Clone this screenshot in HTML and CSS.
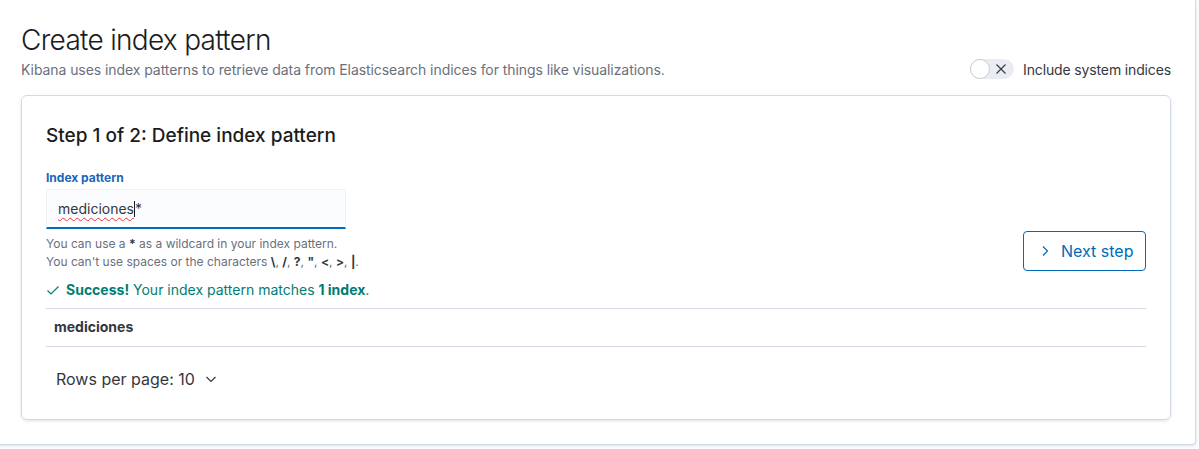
FILE: index.html
```html
<!DOCTYPE html>
<html>
<head>
<meta charset="utf-8">
<link rel="stylesheet" href="styles.css">
</head>
<body>
<div class="page">
  <div class="panel">
    <div class="header">
      <div class="header-text">
        <h1 class="title">Create index pattern</h1>
        <p class="subtitle">Kibana uses index patterns to retrieve data from Elasticsearch indices for things like visualizations.</p>
      </div>
      <div class="switch-wrap">
        <span class="switch">
          <span class="knob"></span>
          <svg class="switch-x" width="12" height="12" viewBox="0 0 12 12"><path d="M1.5 1.5 L10.5 10.5 M10.5 1.5 L1.5 10.5" stroke="#343741" stroke-width="1.1" fill="none"/></svg>
        </span>
        <span class="switch-label">Include system indices</span>
      </div>
    </div>

    <div class="card">
      <h2 class="step-title">Step 1 of 2: Define index pattern</h2>
      <div class="form-row">
        <div class="form-left">
          <label class="field-label">Index pattern</label>
          <div class="input"><span class="typed">mediciones</span><span class="caret"></span>*</div>
          <div class="help">
            <div>You can use a <b>*</b> as a wildcard in your index pattern.</div>
            <div>You can't use spaces or the characters <b>\</b>, <b>/</b>, <b>?</b>, <b>"</b>, <b>&lt;</b>, <b>&gt;</b>, <b>|</b>.</div>
          </div>
        </div>
        <button class="next-btn">
          <svg width="16" height="16" viewBox="0 0 16 16"><path d="M6 3.5 L10.5 8 L6 12.5" stroke="#006bb8" stroke-width="1.2" fill="none"/></svg>
          <span>Next step</span>
        </button>
      </div>
      <div class="success">
        <svg width="14" height="14" viewBox="0 0 14 14"><path d="M1.5 7.5 L5 11 L12.5 3.5" stroke="#017d73" stroke-width="1.2" fill="none"/></svg>
        <span><b>Success!</b> Your index pattern matches <b>1 index</b>.</span>
      </div>
      <div class="table">
        <div class="row">mediciones</div>
      </div>
      <div class="pager">
        <span>Rows per page: 10</span>
        <svg width="16" height="16" viewBox="0 0 16 16"><path d="M3.5 6 L8 10.5 L12.5 6" stroke="#343741" stroke-width="1.2" fill="none"/></svg>
      </div>
    </div>
  </div>
</div>
</body>
</html>
```

FILE: styles.css
```css
* { box-sizing: border-box; }
html, body { margin: 0; padding: 0; }
body {
  background: #fafbfd;
  font-family: Inter, "Liberation Sans", sans-serif;
  color: #343741;
  width: 1199px;
  height: 449px;
  overflow: hidden;
}
.page {
  padding-right: 3px;
}
.panel {
  background: #fff;
  border-right: 1px solid #d3dae6;
  border-bottom: 1px solid #d3dae6;
  border-bottom-right-radius: 4px;
  box-shadow: 0 1px 2px rgba(152,162,179,0.3);
  padding: 20px 24px 23px 21px;
  height: 445px;
}
.header {
  display: flex;
  justify-content: space-between;
  align-items: flex-end;
}
.title {
  margin: 0;
  font-size: 28px;
  font-weight: 300;
  line-height: 40px;
  color: #1a1c21;
  letter-spacing: -0.025em;
}
.subtitle {
  margin: 0;
  font-size: 14px;
  line-height: 20px;
  color: #69707d;
  letter-spacing: -0.005em;
}
.switch-wrap {
  display: flex;
  align-items: center;
  gap: 9px;
  position: relative;
  top: -1px;
}
.switch {
  width: 44px;
  height: 20px;
  border-radius: 10px;
  background: #e9edf3;
  display: flex;
  align-items: center;
  justify-content: flex-end;
  padding-right: 7px;
  position: relative;
}
.knob {
  position: absolute;
  left: 0;
  top: 0;
  width: 20px;
  height: 20px;
  border-radius: 50%;
  background: #fff;
  border: 1px solid #c8ccd3;
}
.switch-label {
  font-size: 14px;
  color: #343741;
  letter-spacing: -0.01em;
}
.card {
  margin-top: 15px;
  border: 1px solid #d3dae6;
  border-radius: 6px;
  box-shadow: 0 1px 3px rgba(152,162,179,0.35);
  padding: 26px 24px 24px 24px;
  height: 325px;
}
.step-title {
  margin: 0;
  font-size: 19px;
  font-weight: 500;
  line-height: 28px;
  color: #1a1c21;
}
.form-row {
  display: flex;
  justify-content: space-between;
  align-items: flex-end;
  margin-top: 19px;
}
.field-label {
  display: block;
  font-size: 12px;
  font-weight: 700;
  color: #1a65b8;
  line-height: 18px;
  margin-bottom: 2px;
}
.input {
  width: 300px;
  height: 40px;
  background: #fbfcfd;
  border: 1px solid #eef1f5;
  border-bottom: 2px solid #006bb8;
  padding: 0 11px;
  font-size: 14px;
  line-height: 38px;
  color: #343741;
  display: flex;
  align-items: center;
}
.typed {
  text-decoration: underline wavy #e0383e;
  text-decoration-thickness: 1px;
  text-underline-offset: 3px;
}
.caret {
  display: inline-block;
  width: 1px;
  height: 16px;
  background: #1a1c21;
}
.help {
  margin-top: 6px;
  font-size: 12px;
  line-height: 18px;
  color: #69707d;
}
.help b { color: #343741; font-weight: 700; }
.next-btn {
  display: flex;
  align-items: center;
  gap: 8px;
  height: 40px;
  width: 123px;
  white-space: nowrap;
  padding: 0 10px 0 13px;
  border: 1px solid #006bb8;
  border-radius: 4px;
  background: #fff;
  color: #006bb8;
  font-family: inherit;
  font-size: 16px;
}
.success {
  display: flex;
  align-items: center;
  gap: 6px;
  margin-top: 9px;
  font-size: 14px;
  line-height: 20px;
  color: #017d73;
}
.success b { font-weight: 700; }
.table {
  margin-top: 8px;
  border-top: 1px solid #d3dae6;
  border-bottom: 1px solid #d3dae6;
}
.row {
  padding: 0 8px;
  height: 37px;
  line-height: 36px;
  font-size: 14px;
  font-weight: 700;
  color: #343741;
}
.pager {
  display: flex;
  align-items: center;
  gap: 8px;
  margin-top: 22px;
  padding-left: 10px;
  font-size: 16px;
  color: #343741;
}
```
